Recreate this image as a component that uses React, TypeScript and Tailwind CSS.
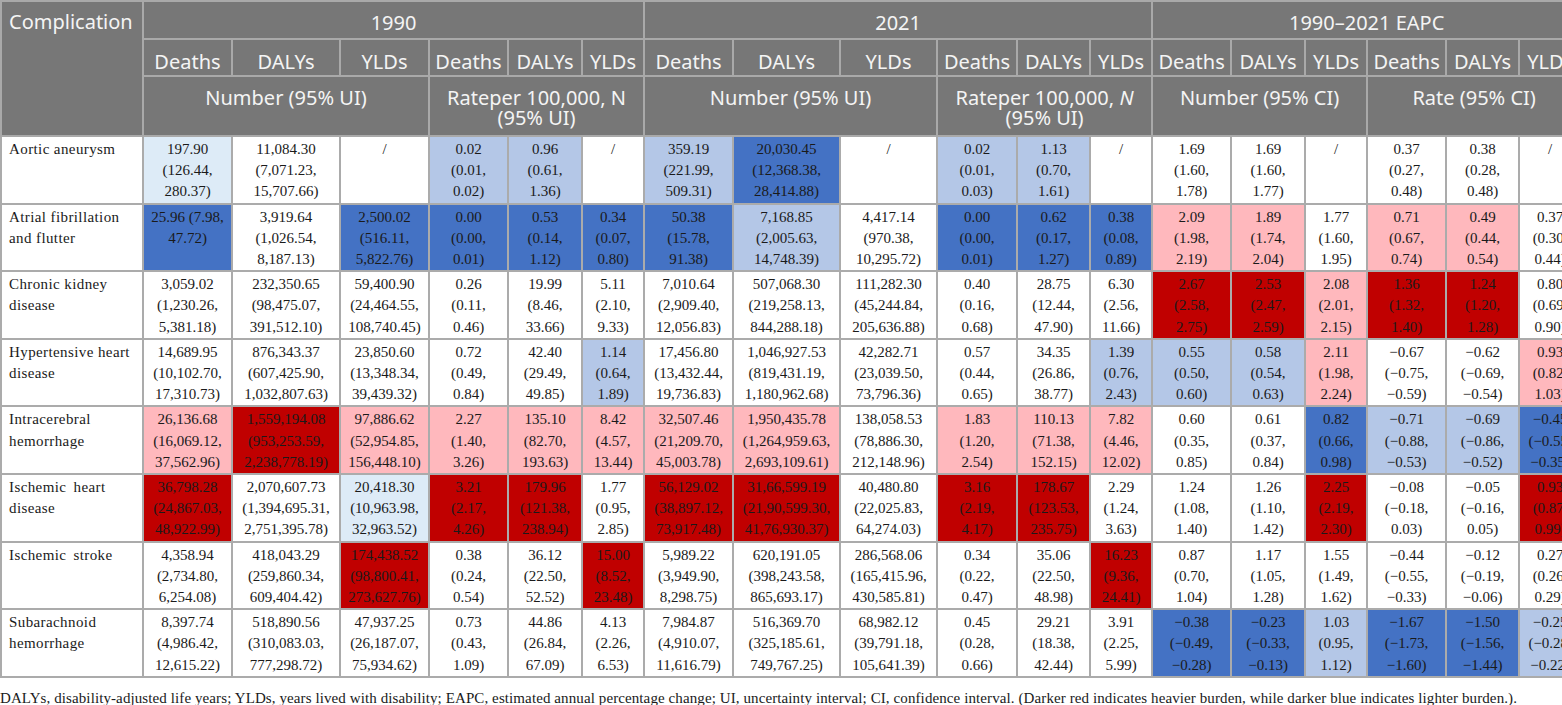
type Tone = "W" | "L" | "B" | "D" | "P" | "R";

const TONE_BG: Record<Tone, string> = {
  W: "bg-white",
  L: "bg-[#ddebf7]",
  B: "bg-[#b4c7e7]",
  D: "bg-[#4472c4]",
  P: "bg-[#ffb8bd]",
  R: "bg-[#c00000]",
};

interface Row {
  name: string[];
  wide?: boolean;
  tones: string;
  values: string[];
}

// values: "a (lo, hi)" or "/" ; a "|" splits lines by hand
const ROWS: Row[] = [
  {
    name: ["Aortic aneurysm"],
    tones: "LWWBBW" + "BDWBBW" + "WWWWWW",
    values: [
      "197.90 (126.44, 280.37)", "11,084.30 (7,071.23, 15,707.66)", "/", "0.02 (0.01, 0.02)", "0.96 (0.61, 1.36)", "/",
      "359.19 (221.99, 509.31)", "20,030.45 (12,368.38, 28,414.88)", "/", "0.02 (0.01, 0.03)", "1.13 (0.70, 1.61)", "/",
      "1.69 (1.60, 1.78)", "1.69 (1.60, 1.77)", "/", "0.37 (0.27, 0.48)", "0.38 (0.28, 0.48)", "/",
    ],
  },
  {
    name: ["Atrial fibrillation", "and flutter"],
    tones: "DWDDDD" + "DBWDDD" + "PPWPPW",
    values: [
      "25.96 (7.98,|47.72)", "3,919.64 (1,026.54, 8,187.13)", "2,500.02 (516.11, 5,822.76)", "0.00 (0.00, 0.01)", "0.53 (0.14, 1.12)", "0.34 (0.07, 0.80)",
      "50.38 (15.78, 91.38)", "7,168.85 (2,005.63, 14,748.39)", "4,417.14 (970.38, 10,295.72)", "0.00 (0.00, 0.01)", "0.62 (0.17, 1.27)", "0.38 (0.08, 0.89)",
      "2.09 (1.98, 2.19)", "1.89 (1.74, 2.04)", "1.77 (1.60, 1.95)", "0.71 (0.67, 0.74)", "0.49 (0.44, 0.54)", "0.37 (0.30, 0.44)",
    ],
  },
  {
    name: ["Chronic kidney", "disease"],
    tones: "WWWWWW" + "WWWWWW" + "RRPRRW",
    values: [
      "3,059.02 (1,230.26, 5,381.18)", "232,350.65 (98,475.07, 391,512.10)", "59,400.90 (24,464.55, 108,740.45)", "0.26 (0.11, 0.46)", "19.99 (8.46, 33.66)", "5.11 (2.10, 9.33)",
      "7,010.64 (2,909.40, 12,056.83)", "507,068.30 (219,258.13, 844,288.18)", "111,282.30 (45,244.84, 205,636.88)", "0.40 (0.16, 0.68)", "28.75 (12.44, 47.90)", "6.30 (2.56, 11.66)",
      "2.67 (2.58, 2.75)", "2.53 (2.47, 2.59)", "2.08 (2.01, 2.15)", "1.36 (1.32, 1.40)", "1.24 (1.20, 1.28)", "0.80 (0.69, 0.90)",
    ],
  },
  {
    name: ["Hypertensive heart", "disease"],
    tones: "WWWWWB" + "WWWWWB" + "BBPWWP",
    values: [
      "14,689.95 (10,102.70, 17,310.73)", "876,343.37 (607,425.90, 1,032,807.63)", "23,850.60 (13,348.34, 39,439.32)", "0.72 (0.49, 0.84)", "42.40 (29.49, 49.85)", "1.14 (0.64, 1.89)",
      "17,456.80 (13,432.44, 19,736.83)", "1,046,927.53 (819,431.19, 1,180,962.68)", "42,282.71 (23,039.50, 73,796.36)", "0.57 (0.44, 0.65)", "34.35 (26.86, 38.77)", "1.39 (0.76, 2.43)",
      "0.55 (0.50, 0.60)", "0.58 (0.54, 0.63)", "2.11 (1.98, 2.24)", "−0.67 (−0.75, −0.59)", "−0.62 (−0.69, −0.54)", "0.93 (0.82, 1.03)",
    ],
  },
  {
    name: ["Intracerebral", "hemorrhage"],
    tones: "PRPPPP" + "PPWPPP" + "WWDBBD",
    values: [
      "26,136.68 (16,069.12, 37,562.96)", "1,559,194.08 (953,253.59, 2,238,778.19)", "97,886.62 (52,954.85, 156,448.10)", "2.27 (1.40, 3.26)", "135.10 (82.70, 193.63)", "8.42 (4.57, 13.44)",
      "32,507.46 (21,209.70, 45,003.78)", "1,950,435.78 (1,264,959.63, 2,693,109.61)", "138,058.53 (78,886.30, 212,148.96)", "1.83 (1.20, 2.54)", "110.13 (71.38, 152.15)", "7.82 (4.46, 12.02)",
      "0.60 (0.35, 0.85)", "0.61 (0.37, 0.84)", "0.82 (0.66, 0.98)", "−0.71 (−0.88, −0.53)", "−0.69 (−0.86, −0.52)", "−0.45 (−0.55, −0.35)",
    ],
  },
  {
    name: ["Ischemic heart", "disease"],
    wide: true,
    tones: "RWLRRW" + "RRWRRW" + "WWRWWR",
    values: [
      "36,798.28 (24,867.03, 48,922.99)", "2,070,607.73 (1,394,695.31, 2,751,395.78)", "20,418.30 (10,963.98, 32,963.52)", "3.21 (2.17, 4.26)", "179.96 (121.38, 238.94)", "1.77 (0.95, 2.85)",
      "56,129.02 (38,897.12, 73,917.48)", "31,66,599.19 (21,90,599.30, 41,76,930.37)", "40,480.80 (22,025.83, 64,274.03)", "3.16 (2.19, 4.17)", "178.67 (123.53, 235.75)", "2.29 (1.24, 3.63)",
      "1.24 (1.08, 1.40)", "1.26 (1.10, 1.42)", "2.25 (2.19, 2.30)", "−0.08 (−0.18, 0.03)", "−0.05 (−0.16, 0.05)", "0.93 (0.87, 0.99)",
    ],
  },
  {
    name: ["Ischemic stroke"],
    wide: true,
    tones: "WWRWWR" + "WWWWWR" + "WWWWWW",
    values: [
      "4,358.94 (2,734.80, 6,254.08)", "418,043.29 (259,860.34, 609,404.42)", "174,438.52 (98,800.41, 273,627.76)", "0.38 (0.24, 0.54)", "36.12 (22.50, 52.52)", "15.00 (8.52, 23.48)",
      "5,989.22 (3,949.90, 8,298.75)", "620,191.05 (398,243.58, 865,693.17)", "286,568.06 (165,415.96, 430,585.81)", "0.34 (0.22, 0.47)", "35.06 (22.50, 48.98)", "16.23 (9.36, 24.41)",
      "0.87 (0.70, 1.04)", "1.17 (1.05, 1.28)", "1.55 (1.49, 1.62)", "−0.44 (−0.55, −0.33)", "−0.12 (−0.19, −0.06)", "0.27 (0.26, 0.29)",
    ],
  },
  {
    name: ["Subarachnoid", "hemorrhage"],
    tones: "WWWWWW" + "WWWWWW" + "DDBDDB",
    values: [
      "8,397.74 (4,986.42, 12,615.22)", "518,890.56 (310,083.03, 777,298.72)", "47,937.25 (26,187.07, 75,934.62)", "0.73 (0.43, 1.09)", "44.86 (26.84, 67.09)", "4.13 (2.26, 6.53)",
      "7,984.87 (4,910.07, 11,616.79)", "516,369.70 (325,185.61, 749,767.25)", "68,982.12 (39,791.18, 105,641.39)", "0.45 (0.28, 0.66)", "29.21 (18.38, 42.44)", "3.91 (2.25, 5.99)",
      "−0.38 (−0.49, −0.28)", "−0.23 (−0.33, −0.13)", "1.03 (0.95, 1.12)", "−1.67 (−1.73, −1.60)", "−1.50 (−1.56, −1.44)", "−0.25 (−0.28, −0.22)",
    ],
  },
];

function lines(v: string): string[] {
  if (v.includes("|")) return v.split("|");
  const m = v.match(/^(\S+) \((\S+), (\S+)\)$/);
  if (!m) return [v];
  return [m[1], `(${m[2]},`, `${m[3]})`];
}

const SUB = ["Deaths", "DALYs", "YLDs", "Deaths", "DALYs", "YLDs", "Deaths", "DALYs", "YLDs", "Deaths", "DALYs", "YLDs", "Deaths", "DALYs", "YLDs", "Deaths", "DALYs", "YLDs"];

const th = "bg-[#777777] text-[#f4f4f4] border-2 border-[#a9a9a9] font-normal";

export default function App() {
  return (
    <div className="w-[1562px] h-[705px] overflow-hidden bg-white">
      <table className="table-fixed border-collapse w-[1580px] font-['Liberation_Serif',serif] text-[15px] text-[#1a1a1a]">
        <colgroup>
          <col className="w-[142px]" />
          <col className="w-[89px]" />
          <col className="w-[108px]" />
          <col className="w-[89px]" />
          <col className="w-[79px]" />
          <col className="w-[74px]" />
          <col className="w-[62px]" />
          <col className="w-[89px]" />
          <col className="w-[107px]" />
          <col className="w-[97px]" />
          <col className="w-[80px]" />
          <col className="w-[73px]" />
          <col className="w-[62px]" />
          <col className="w-[79px]" />
          <col className="w-[74px]" />
          <col className="w-[62px]" />
          <col className="w-[79px]" />
          <col className="w-[73px]" />
          <col className="w-[62px]" />
        </colgroup>
        <thead className="font-['Noto_Sans',sans-serif] text-[20px]">
          <tr className="h-[38px]">
            <th rowSpan={3} className={`${th} text-left align-top pl-[7px] pt-[8px] leading-[24px]`}>
              Complication
            </th>
            {["1990", "2021", "1990–2021 EAPC"].map((y) => (
              <th key={y} colSpan={6} className={`${th} text-center align-bottom pb-[3px] leading-[24px]`}>
                {y}
              </th>
            ))}
          </tr>
          <tr className="h-[37px]">
            {SUB.map((s, i) => (
              <th key={i} className={`${th} text-center align-bottom pb-[1px] leading-[24px] whitespace-nowrap`}>
                {s}
              </th>
            ))}
          </tr>
          <tr className="h-[60px]">
            <th colSpan={3} className={`${th} text-center align-top pt-[11px] leading-[20px]`}>Number (95% UI)</th>
            <th colSpan={3} className={`${th} text-center align-top pt-[11px] leading-[20px]`}>
              Rateper 100,000, N<br />(95% UI)
            </th>
            <th colSpan={3} className={`${th} text-center align-top pt-[11px] leading-[20px]`}>Number (95% UI)</th>
            <th colSpan={3} className={`${th} text-center align-top pt-[11px] leading-[20px]`}>
              Rateper 100,000, <i>N</i>
              <br />
              (95% UI)
            </th>
            <th colSpan={3} className={`${th} text-center align-top pt-[11px] leading-[20px]`}>Number (95% CI)</th>
            <th colSpan={3} className={`${th} text-center align-top pt-[11px] leading-[20px]`}>Rate (95% CI)</th>
          </tr>
        </thead>
        <tbody>
          {ROWS.map((r) => (
            <tr key={r.name.join(" ")}>
              <td className="border-2 border-[#ababab] align-top text-left pl-[7px] pt-[2px] leading-[21.2px] tracking-[0.4px]">
                {r.name.map((n) => (
                  <div key={n} className={r.wide ? "[word-spacing:3px]" : ""}>
                    {n}
                  </div>
                ))}
              </td>
              {r.values.map((v, i) => (
                <td
                  key={i}
                  className={`border-2 border-[#ababab] align-top text-center px-[2px] pt-[2px] leading-[21.2px] whitespace-nowrap ${TONE_BG[r.tones[i] as Tone]}`}
                >
                  {lines(v).map((l, j) => (
                    <div key={j}>{l}</div>
                  ))}
                </td>
              ))}
            </tr>
          ))}
        </tbody>
      </table>
      <p className="mt-[11px] font-['Liberation_Serif',serif] text-[15px] tracking-[0.1px] leading-[18px] text-[#1a1a1a] whitespace-nowrap">
        DALYs, disability-adjusted life years; YLDs, years lived with disability; EAPC, estimated annual percentage change; UI, uncertainty interval; CI, confidence interval. (Darker red indicates heavier burden, while darker blue indicates lighter burden.).
      </p>
    </div>
  );
}
